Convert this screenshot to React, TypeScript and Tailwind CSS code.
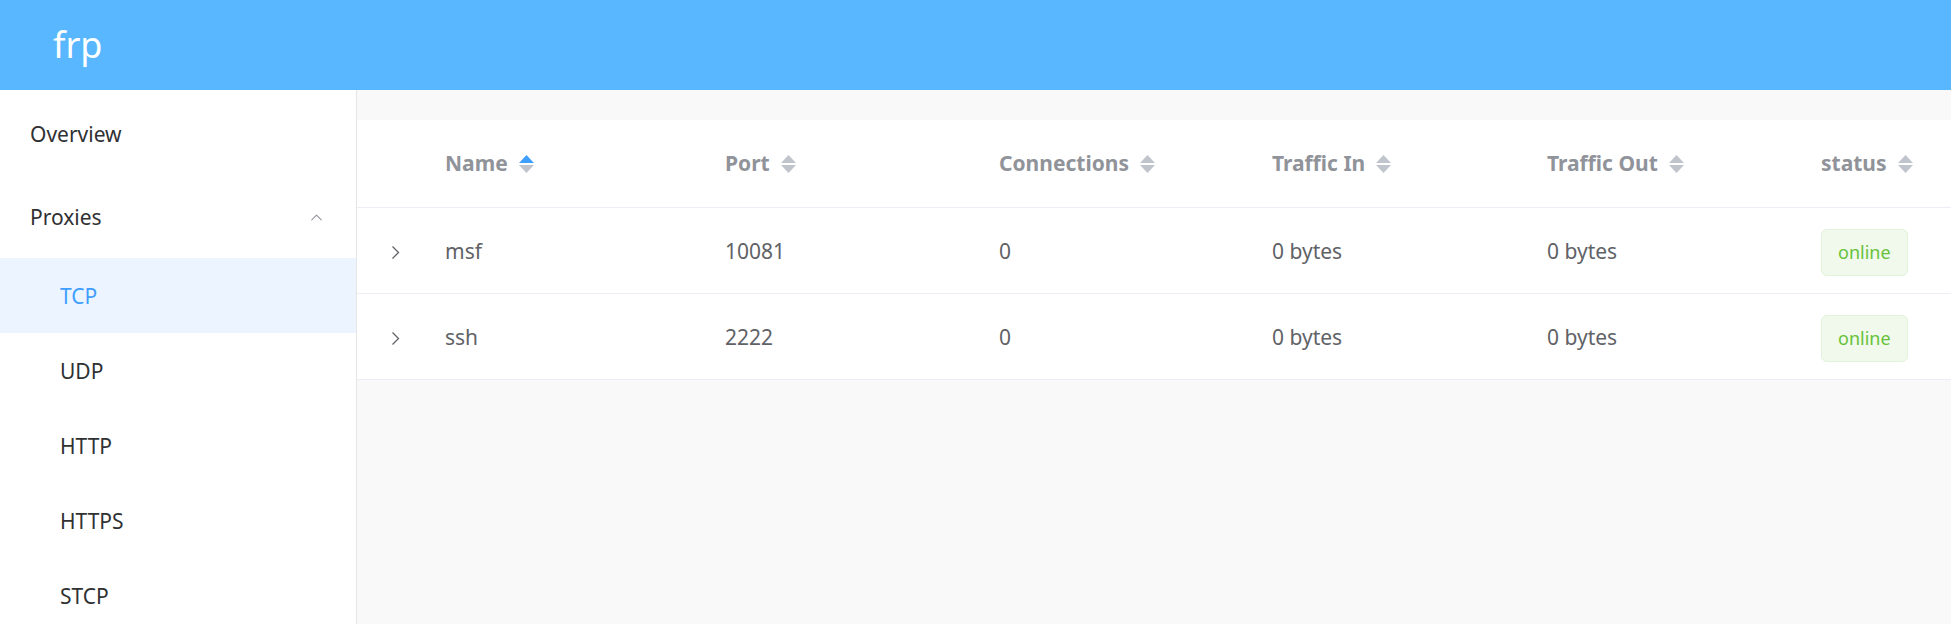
import { ChevronUp } from "lucide-react";

type Proxy = {
  name: string;
  port: number;
  conns: number;
  trafficIn: string;
  trafficOut: string;
  status: string;
};

const proxies: Proxy[] = [
  { name: "msf", port: 10081, conns: 0, trafficIn: "0 bytes", trafficOut: "0 bytes", status: "online" },
  { name: "ssh", port: 2222, conns: 0, trafficIn: "0 bytes", trafficOut: "0 bytes", status: "online" },
];

const columns = ["Name", "Port", "Connections", "Traffic In", "Traffic Out", "status"];

function SortCaret({ active }: { active?: boolean }) {
  return (
    <svg width="15" height="18" viewBox="0 0 15 18" className="ml-[11px] shrink-0">
      <polygon points="7.5,0 15,8 0,8" fill={active ? "#409eff" : "#c0c4cc"} />
      <polygon points="0,10 15,10 7.5,18" fill="#c0c4cc" />
    </svg>
  );
}

function ExpandArrow() {
  return (
    <svg width="9" height="15" viewBox="0 0 9 15">
      <polyline points="1.5,1.5 7.5,7.5 1.5,13.5" fill="none" stroke="#606266" strokeWidth="1.3" />
    </svg>
  );
}

function Sidebar() {
  const subItems = ["TCP", "UDP", "HTTP", "HTTPS", "STCP"];
  return (
    <aside className="w-[357px] shrink-0 border-r border-[#e6e6e6] bg-white">
      <div className="flex h-[84px] items-center pl-[30px] pt-[5px] text-[21px] text-[#303133]">
        Overview
      </div>
      <div className="flex h-[84px] items-center justify-between pl-[30px] pr-[30px] pt-[3px] text-[21px] text-[#303133]">
        <span>Proxies</span>
        <ChevronUp size={19} strokeWidth={1.3} color="#909399" />
      </div>
      {subItems.map((item) => (
        <div
          key={item}
          className={`flex h-[75px] items-center pl-[60px] pt-[3px] text-[21px] ${
            item === "TCP" ? "bg-[#ecf5ff] text-[#409eff]" : "text-[#303133]"
          }`}
        >
          {item}
        </div>
      ))}
    </aside>
  );
}

function ProxyTable() {
  return (
    <div className="bg-white">
      <div className="grid h-[88px] grid-cols-[88px_280px_274px_273px_275px_274px_1fr] items-center border-b border-[#ebeef5] text-[21px] font-bold text-[#909399]">
        <div />
        {columns.map((col, i) => (
          <div key={col} className="flex items-center">
            <span>{col}</span>
            <SortCaret active={i === 0} />
          </div>
        ))}
      </div>
      {proxies.map((p) => (
        <div
          key={p.name}
          className="grid h-[86px] grid-cols-[88px_280px_274px_273px_275px_274px_1fr] items-center border-b border-[#ebeef5] pt-[3px] text-[21px] text-[#606266]"
        >
          <div className="flex pl-[34px]">
            <ExpandArrow />
          </div>
          <div>{p.name}</div>
          <div>{p.port}</div>
          <div>{p.conns}</div>
          <div>{p.trafficIn}</div>
          <div>{p.trafficOut}</div>
          <div>
            <span className="inline-flex h-[47px] items-center rounded-[6px] border border-[#e1f3d8] bg-[#f0f9eb] px-[16px] text-[18px] text-[#67c23a]">
              {p.status}
            </span>
          </div>
        </div>
      ))}
    </div>
  );
}

export default function App() {
  return (
    <div className="flex h-[624px] flex-col overflow-hidden bg-[#f9f9f9] font-['Noto_Sans','Open_Sans',sans-serif]">
      <header className="flex h-[90px] shrink-0 items-center bg-[#58b7ff] pl-[53px]">
        <span className="text-[36px] leading-none text-white">frp</span>
      </header>
      <div className="flex min-h-0 flex-1">
        <Sidebar />
        <main className="flex-1 pt-[30px]">
          <ProxyTable />
        </main>
      </div>
    </div>
  );
}
